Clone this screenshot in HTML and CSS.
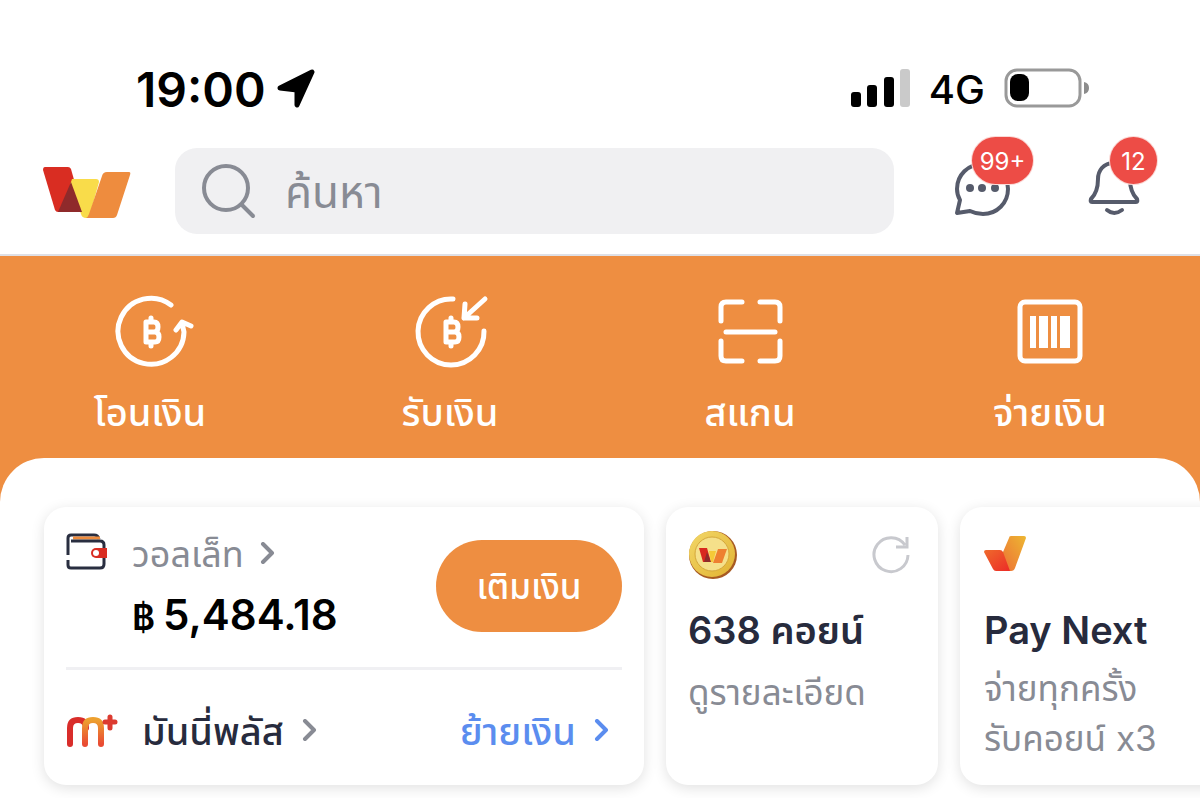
FILE: index.html
```html
<!DOCTYPE html>
<html lang="th">
<head>
  <meta charset="UTF-8">
  <meta name="viewport" content="width=device-width, initial-scale=1">
  <title>Wallet</title>
  <link rel="stylesheet" href="styles.css">
</head>
<body>

  <div class="status">
    <span class="time">19:00</span>
    <svg class="location" width="40" height="42" viewBox="0 0 40 42">
      <path d="M36 3 21 36V21L4 19z" fill="#000" stroke="#000" stroke-width="5" stroke-linejoin="round"/>
    </svg>
    <svg class="signal" width="60" height="42" viewBox="0 0 60 42">
      <rect x="0" y="23" width="10" height="15" rx="3"/>
      <rect x="16" y="16" width="10" height="22" rx="3"/>
      <rect x="33" y="8" width="10" height="30" rx="3"/>
      <rect x="49" y="0" width="10" height="38" rx="3" fill="#cacaca"/>
    </svg>
    <span class="network">4G</span>
    <svg width="86" height="44" viewBox="0 0 86 44">
      <rect x="2" y="2" width="74" height="36" rx="11" fill="none" stroke="#999" stroke-width="3"/>
      <rect x="6" y="6" width="19" height="27" rx="8"/>
      <path d="M80 14q5 1 5 6t-5 6z" fill="#8c8c8c"/>
    </svg>
  </div>

  <header class="header">
    <a class="logo" href="#" aria-label="Home">
      <svg width="88" height="56" viewBox="0 -4 88 56">
        <path d="M2 0h23q2 0 3 2l12 43H15q-2 0-3-2L0 3q0-3 2-3z" fill="#d92d22"/>
        <path d="M29 12h24q3 0 3 3l-10 36h-3q-4 0-5-4L27 18z" fill="#f9dc4a"/>
        <path d="M28 15 15 45h24z" fill="#8f2a2b"/>
        <path d="M64 5h22q2 0 1 3L74 48q-1 3-4 3H43q2-1 3-4L59 9q1-4 5-4z" fill="#ee8c3e"/>
      </svg>
    </a>
    <label class="search">
      <svg width="56" height="56" viewBox="0 0 56 56" fill="none" stroke="#888b94" stroke-width="4" stroke-linecap="round">
        <circle cx="25" cy="25" r="22"/>
        <path d="m41 42 11 11"/>
      </svg>
      <input type="search" placeholder="ค้นหา" aria-label="ค้นหา">
    </label>
    <div class="tools">
      <button class="tool" aria-label="Chat">
        <svg width="60" height="60" viewBox="0 0 60 60" fill="none" stroke="#565b6b" stroke-width="4" stroke-linecap="round" stroke-linejoin="round">
          <path d="M31 3C16 3 5 14 5 28q0 6 3 11L5 52l13-2q6 3 13 3c14 0 25-11 25-25S45 3 31 3z"/>
          <g fill="#565b6b" stroke="none"><circle cx="18" cy="27" r="4"/><circle cx="30" cy="27" r="4"/><circle cx="43" cy="27" r="4"/></g>
        </svg>
        <span class="badge">99+</span>
      </button>
      <button class="tool" aria-label="Notifications">
        <svg width="60" height="60" viewBox="0 0 60 60" fill="none" stroke="#565b6b" stroke-width="4" stroke-linecap="round" stroke-linejoin="round">
          <path d="M30 2C19 2 14 10 14 18q0 13-7 20-1 3 1 3h44q2 0 1-3-7-7-7-20C46 10 41 2 30 2z"/>
          <path d="M23 49q7 6 15 0"/>
        </svg>
        <span class="badge badge-small">12</span>
      </button>
    </div>
  </header>

  <main class="main">
    <nav class="actions">
      <a href="#">
        <svg width="88" height="80" viewBox="0 0 88 80">
          <path d="M65 13A33 33 0 1 0 78 40L76 31M70 38l6-8 9 4"/>
          <path class="baht" d="M40 30h8q4 0 4 5t-4 5h-8zM40 40h9q4 0 4 5t-4 5h-9zM45 26v4M45 50v4"/>
        </svg>
        <span>โอนเงิน</span>
      </a>
      <a href="#">
        <svg width="88" height="80" viewBox="0 0 88 80">
          <path d="M47 7A33 33 0 1 0 78 39M79 7 58 26M59 12l-1 14h13"/>
          <path class="baht" d="M40 30h8q4 0 4 5t-4 5h-8zM40 40h9q4 0 4 5t-4 5h-9zM45 26v4M45 50v4"/>
        </svg>
        <span>รับเงิน</span>
      </a>
      <a href="#">
        <svg width="88" height="80" viewBox="0 0 88 80">
          <path d="M36 10H20q-5 0-5 5v14M54 10h15q5 0 5 5v14M15 49v15q0 5 5 5h16M54 69h15q5 0 5-5V49M20 40h49"/>
        </svg>
        <span>สแกน</span>
      </a>
      <a href="#">
        <svg width="88" height="80" viewBox="0 0 88 80">
          <rect x="14" y="10" width="60" height="59" rx="5"/>
          <path class="bars" d="M24 24h6v32h-6zM33 24h9v32h-9zM45 24h6v32h-6zM54 24h10v32H54z"/>
        </svg>
        <span>จ่ายเงิน</span>
      </a>
    </nav>

    <section class="sheet">
      <div class="card wallet">
        <div class="balance">
          <svg width="44" height="38" viewBox="0 0 44 38" fill="none" stroke="#292e40" stroke-width="3">
            <path d="M2 22V5q0-3 3-3h23q4 0 5 4" />
            <path d="M7 5h27" stroke="#ee8c3e"/>
            <path d="M5 8h29q4 0 4 4v3M38 25v6q0 4-4 4H5q-3 0-3-3v-5"/>
            <path d="M41 15v10H30a5 5 0 0 1 0-10z" fill="#d92d22" stroke="none"/>
            <circle cx="30" cy="20" r="3" fill="#fff" stroke="none"/>
          </svg>
          <div class="balance-text">
            <a class="wallet-link" href="#">วอลเล็ท
              <svg class="chevron" width="16" height="24" viewBox="0 0 16 24"><path d="m3 2 9 9-9 9"/></svg>
            </a>
            <div class="amount"><span class="currency">฿</span> 5,484.18</div>
          </div>
          <button class="topup">เติมเงิน</button>
        </div>
        <div class="money-plus">
          <svg width="54" height="36" viewBox="0 0 54 36" fill="none" stroke-width="6" stroke-linecap="round">
            <defs>
              <linearGradient id="plusFill" x1="0" y1="0" x2="0" y2="1">
                <stop offset="0" stop-color="#eda02f"/>
                <stop offset="1" stop-color="#e94b33"/>
              </linearGradient>
            </defs>
            <path d="M4 31V15q0-8 8-8t8 8" stroke="#d92d2a"/>
            <path d="M19 31V15q0-8 8-8t8 8v16" stroke="url(#plusFill)"/>
            <path d="M44 4v11M39 9h10" stroke="#dc3b30" stroke-width="5"/>
          </svg>
          <a class="plus-link" href="#">มันนี่พลัส
            <svg class="chevron" width="16" height="24" viewBox="0 0 16 24"><path d="m3 2 9 9-9 9"/></svg>
          </a>
          <a class="move" href="#">ย้ายเงิน
            <svg class="chevron" width="16" height="24" viewBox="0 0 16 24"><path d="m3 2 9 9-9 9"/></svg>
          </a>
        </div>
      </div>

      <div class="card coins">
        <div class="card-top">
          <svg width="50" height="48" viewBox="0 0 50 48">
            <defs>
              <linearGradient id="coinFill" x1="0" y1="0" x2="1" y2="1">
                <stop offset="0" stop-color="#f2d768"/>
                <stop offset="1" stop-color="#e2b332"/>
              </linearGradient>
            </defs>
            <circle cx="25" cy="24" r="24" fill="#a75a22"/>
            <circle cx="24" cy="23" r="23" fill="url(#coinFill)"/>
            <circle cx="24" cy="23" r="17" fill="#f5e08a" stroke="#d5a83c"/>
            <path d="M11 17h8l4 14h-8z" fill="#d8281f"/>
            <path d="m19 21 4 10h-7z" fill="#8f2a2b"/>
            <path d="M21 20h7l-3 11h-2z" fill="#f5c937"/>
            <path d="M30 18h9l-5 14h-9z" fill="#ee8030"/>
          </svg>
          <button class="refresh" aria-label="Refresh">
            <svg width="44" height="44" viewBox="0 0 44 44" fill="none" stroke="#c8c9ce" stroke-width="3">
              <path d="M36 22A17 17 0 1 1 33 12M35 4v10H24"/>
            </svg>
          </button>
        </div>
        <h2>638 คอยน์</h2>
        <p>ดูรายละเอียด</p>
      </div>

      <div class="card pay-next">
        <div class="card-top">
          <svg width="44" height="48" viewBox="0 0 44 48">
            <defs>
              <linearGradient id="nextFill" x1="1" y1="0" x2="0" y2="1">
                <stop offset="0" stop-color="#edb732"/>
                <stop offset="1" stop-color="#ed7135"/>
              </linearGradient>
              <linearGradient id="tickFill" x1="0" y1="0" x2="1" y2="1">
                <stop offset="0" stop-color="#ef6a2c"/>
                <stop offset="1" stop-color="#ec2c27"/>
              </linearGradient>
            </defs>
            <path d="M27 5h13q2 0 2 2L31 37q-1 3-4 3h-8V21L25 7q0-2 2-2z" fill="url(#nextFill)"/>
            <path d="M2 19h14q2 0 3 2l7 19H12q-2 0-3-2L0 21q0-2 2-2z" fill="url(#tickFill)"/>
          </svg>
        </div>
        <h2>Pay Next</h2>
        <p>จ่ายทุกครั้ง<br>รับคอยน์ x3</p>
      </div>
    </section>
  </main>

</body>
</html>
```
FILE: styles.css
```css
html {
  box-sizing: border-box;
}

*, *:before, *:after {
  box-sizing: inherit;
}

body {
  margin: 0;
  background: #fff;
  color: #272b3d;
  font-family: Inter, "Noto Sans Thai", "Noto Sans", sans-serif;
  overflow-x: hidden;
}

a {
  color: inherit;
  text-decoration: none;
}

button, input {
  font-family: inherit;
  border: 0;
  padding: 0;
  background: none;
}

svg {
  flex: none;
  display: block;
}

/* status bar */
.status {
  display: flex;
  align-items: center;
  padding: 60px 110px 0 136px;
  color: #000;
  line-height: 60px;
}

.time {
  font-size: 48px;
  font-weight: 600;
}

.location {
  margin-left: 10px;
}

.signal {
  margin-left: auto;
}

.network {
  margin: 0 19px 0 18px;
  font-size: 40px;
  font-weight: 500;
}

/* header */
.header {
  display: flex;
  align-items: center;
  padding: 28px 56px 20px 43px;
  border-bottom: 2px solid #dfe0e6;
}

.search {
  flex: 1;
  min-width: 0;
  height: 86px;
  margin: 0 58px 0 44px;
  padding: 0 26px;
  display: flex;
  align-items: center;
  gap: 28px;
  background: #f0f0f2;
  border-radius: 22px;
}

.search input {
  flex: 1;
  min-width: 0;
  padding-top: 2px;
  font-size: 44px;
  line-height: 60px;
  outline: 0;
}

.search input::placeholder {
  color: #888b94;
}

.tools {
  display: flex;
  gap: 72px;
}

.tool {
  position: relative;
  height: 60px;
}

.badge {
  position: absolute;
  top: -24px;
  left: 20px;
  width: 61px;
  padding-top: 3px;
  background: #ed4c46;
  color: #fff;
  border-radius: 24px;
  box-shadow: 0 0 0 1px #fbd9d6;
  font-size: 24px;
  line-height: 44px;
  text-align: center;
}

.badge-small {
  left: 26px;
  width: 47px;
}

/* quick actions */
.main {
  background: linear-gradient(#ee8e41 250px, #fff 250px);
}

.actions {
  display: grid;
  grid-template-columns: repeat(4, 1fr);
  padding: 36px 0 22px;
}

.actions a {
  display: flex;
  flex-direction: column;
  align-items: center;
  gap: 16px;
  color: #fff;
  font-size: 38px;
  font-weight: 500;
  line-height: 48px;
}

.actions svg {
  fill: none;
  stroke: #fff;
  stroke-width: 5;
  stroke-linecap: round;
  stroke-linejoin: round;
}

.actions .bars {
  fill: #fff;
  stroke: none;
}

/* cards */
.sheet {
  display: flex;
  gap: 22px;
  padding: 49px 0 13px 44px;
  background: #fff;
  border-radius: 44px 44px 0 0;
  overflow: hidden;
}

.card {
  flex: 0 0 272px;
  min-height: 278px;
  padding: 24px 22px 0;
  background: #fff;
  border-radius: 22px;
  box-shadow: 0 3px 14px rgba(0, 0, 0, 0.12);
}

.wallet {
  flex-basis: 50vw;
  padding-top: 26px;
}

.balance {
  display: flex;
  align-items: flex-start;
  padding-bottom: 23px;
  border-bottom: 3px solid #f0f0f3;
}

.balance-text {
  margin-left: 22px;
}

.wallet-link,
.plus-link,
.move {
  display: flex;
  align-items: center;
  gap: 18px;
}

.wallet-link {
  gap: 16px;
  color: #888b94;
  font-size: 36px;
  line-height: 42px;
}

.chevron {
  fill: none;
  stroke: #888b94;
  stroke-width: 4;
  stroke-linecap: round;
  stroke-linejoin: round;
}

.amount {
  display: flex;
  align-items: baseline;
  gap: 8px;
  margin-top: 13px;
  color: #000;
  font-size: 42px;
  font-weight: 600;
  line-height: 54px;
}

.currency {
  font-size: 35px;
}

.topup {
  width: 186px;
  height: 92px;
  margin: 7px 0 0 auto;
  padding-top: 4px;
  background: #ee8e41;
  border-radius: 46px;
  color: #fff;
  font-size: 35px;
  font-weight: 500;
}

.money-plus {
  display: flex;
  align-items: center;
  padding-top: 34px;
  font-size: 38px;
  font-weight: 500;
  line-height: 54px;
}

.plus-link {
  margin-left: 22px;
}

.move {
  margin: 0 12px 0 auto;
  color: #5b8def;
}

.move .chevron {
  stroke: #5b8def;
}

.card-top {
  display: flex;
  align-items: center;
  justify-content: space-between;
}

.card h2 {
  margin: 26px 0 0;
  font-size: 38px;
  font-weight: 600;
  line-height: 50px;
  white-space: nowrap;
}

.card p {
  margin: 8px 0 0;
  color: #888b94;
  font-size: 35px;
  line-height: 50px;
  white-space: nowrap;
}

.coins p {
  margin-top: 12px;
}

.pay-next {
  padding-left: 24px;
}
```
